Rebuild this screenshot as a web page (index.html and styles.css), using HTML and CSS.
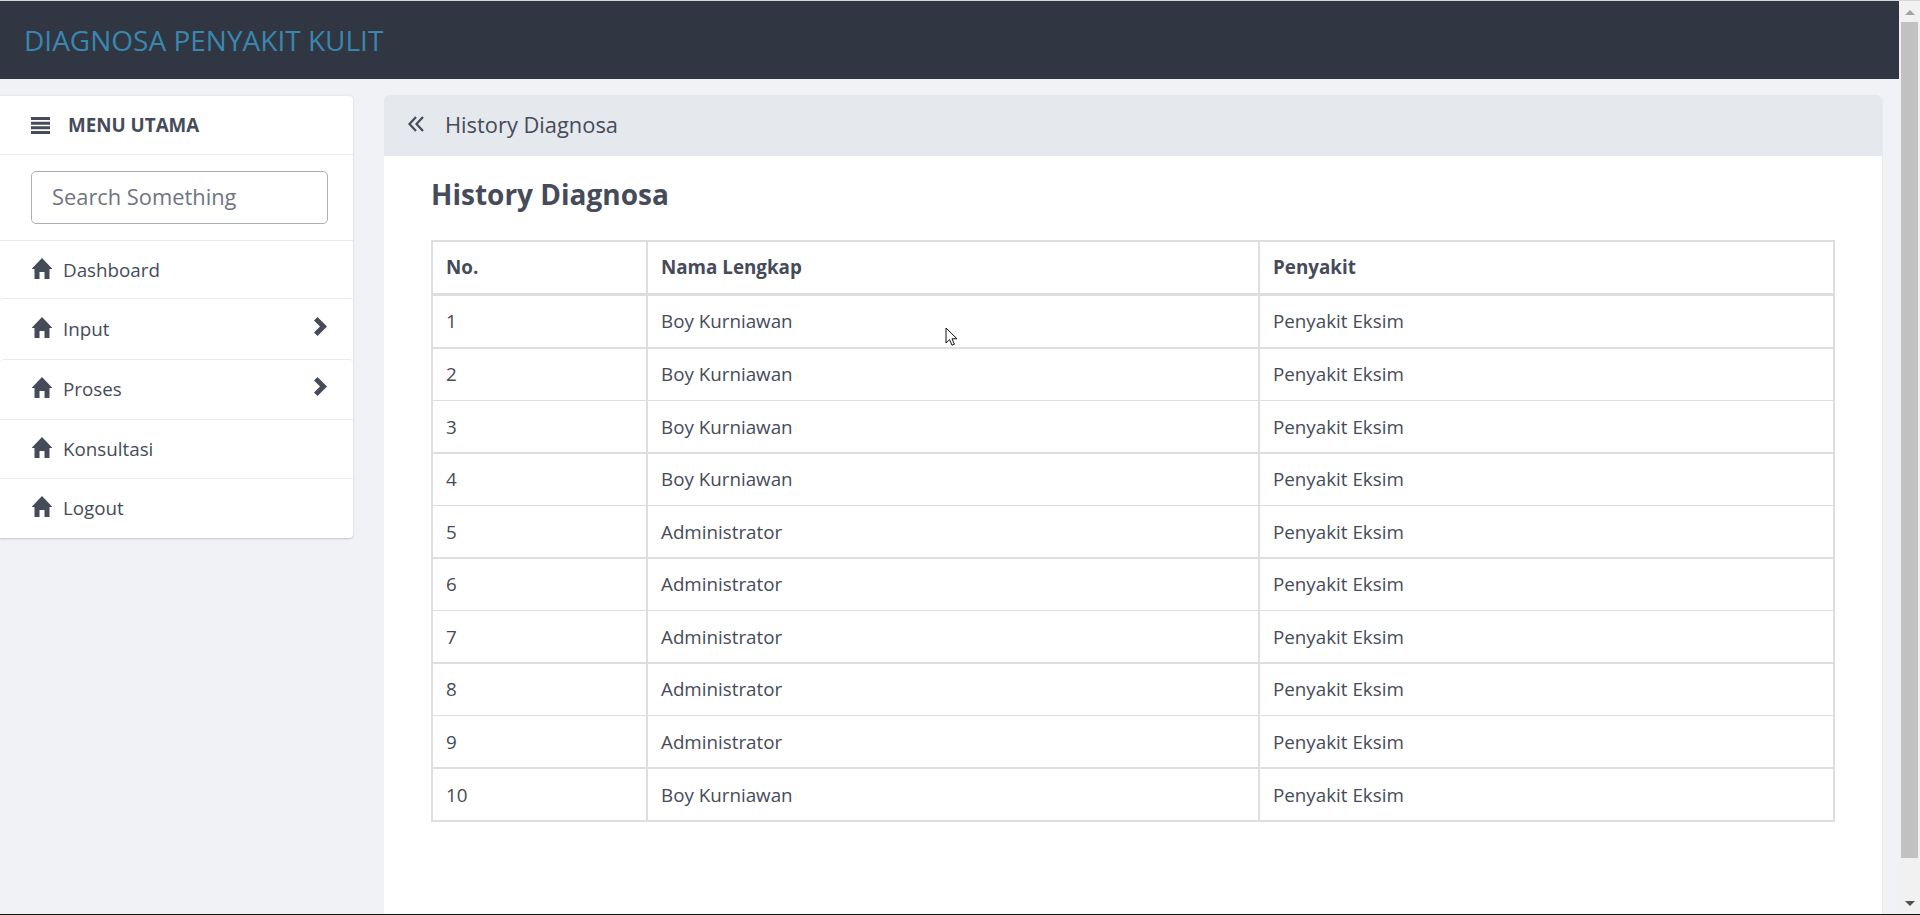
FILE: index.html
```html
<!DOCTYPE html>
<html>
<head>
    <title>History Diagnosa</title>
    <link rel="stylesheet" href="styles.css">
</head>
<body>
    <div class="window">
        <div class="page">
            <header class="topbar">
                <span class="brand">DIAGNOSA PENYAKIT KULIT</span>
            </header>
            <div class="content">
                <aside class="sidebar">
                    <div class="menu-title">
                        <svg class="icon-menu" viewBox="0 0 19 17"><path d="M0 0h19v3H0zM0 4.67h19v3H0zM0 9.33h19v3H0zM0 14h19v3H0z"/></svg>
                        <span>MENU UTAMA</span>
                    </div>
                    <div class="menu-search">
                        <input type="text" placeholder="Search Something">
                    </div>
                    <a class="menu-item item-dash"><svg class="icon-home" viewBox="0 0 20 21"><path d="M10 0 20 10.5V11h-2.5v10h-5v-7h-5v7h-5V11H0v-.5z"/></svg>Dashboard</a>
                    <a class="menu-item item-input"><svg class="icon-home" viewBox="0 0 20 21"><path d="M10 0 20 10.5V11h-2.5v10h-5v-7h-5v7h-5V11H0v-.5z"/></svg>Input<svg class="icon-chevron" viewBox="0 0 13 19"><path d="M3.5 0 13 9.5 3.5 19 0 15.5l6-6-6-6z"/></svg></a>
                    <a class="menu-item item-proses"><svg class="icon-home" viewBox="0 0 20 21"><path d="M10 0 20 10.5V11h-2.5v10h-5v-7h-5v7h-5V11H0v-.5z"/></svg>Proses<svg class="icon-chevron" viewBox="0 0 13 19"><path d="M3.5 0 13 9.5 3.5 19 0 15.5l6-6-6-6z"/></svg></a>
                    <a class="menu-item item-konsul"><svg class="icon-home" viewBox="0 0 20 21"><path d="M10 0 20 10.5V11h-2.5v10h-5v-7h-5v7h-5V11H0v-.5z"/></svg>Konsultasi</a>
                    <a class="menu-item item-logout"><svg class="icon-home" viewBox="0 0 20 21"><path d="M10 0 20 10.5V11h-2.5v10h-5v-7h-5v7h-5V11H0v-.5z"/></svg>Logout</a>
                </aside>
                <main class="panel">
                    <div class="panel-head">
                        <svg class="icon-back" viewBox="0 0 16 16"><path d="M8 1 1.5 8 8 15M15 1 8.5 8l6.5 7"/></svg>
                        <span>History Diagnosa</span>
                    </div>
                    <div class="panel-body">
                        <h2>History Diagnosa</h2>
                        <table class="history">
                            <thead>
                                <tr><th class="col-no">No.</th><th class="col-name">Nama Lengkap</th><th>Penyakit</th></tr>
                            </thead>
                            <tbody>
                                <tr><td>1</td><td>Boy Kurniawan</td><td>Penyakit Eksim</td></tr>
                                <tr><td>2</td><td>Boy Kurniawan</td><td>Penyakit Eksim</td></tr>
                                <tr><td>3</td><td>Boy Kurniawan</td><td>Penyakit Eksim</td></tr>
                                <tr><td>4</td><td>Boy Kurniawan</td><td>Penyakit Eksim</td></tr>
                                <tr><td>5</td><td>Administrator</td><td>Penyakit Eksim</td></tr>
                                <tr><td>6</td><td>Administrator</td><td>Penyakit Eksim</td></tr>
                                <tr><td>7</td><td>Administrator</td><td>Penyakit Eksim</td></tr>
                                <tr><td>8</td><td>Administrator</td><td>Penyakit Eksim</td></tr>
                                <tr><td>9</td><td>Administrator</td><td>Penyakit Eksim</td></tr>
                                <tr><td>10</td><td>Boy Kurniawan</td><td>Penyakit Eksim</td></tr>
                            </tbody>
                        </table>
                    </div>
                </main>
            </div>
        </div>
        <div class="scrollbar">
            <span class="arrow-up"></span>
            <div class="thumb"></div>
            <span class="arrow-down"></span>
        </div>
    </div>
    <svg class="cursor" viewBox="0 0 13 20"><path d="M1 1v15l3.6-3.4 2.4 5.6 2.4-1-2.4-5.4h5z"/></svg>
</body>
</html>
```

FILE: styles.css
```css
html, body {
    margin: 0;
    padding: 0;
    height: 915px;
    overflow: hidden;
}

body {
    font-family: "Open Sans", sans-serif;
    color: #454b59;
    background-color: #f0f2f6;
    position: relative;
}

.window {
    display: flex;
    height: 915px;
    box-sizing: border-box;
    border-top: 1px solid #d8d8d8;
    border-bottom: 1px solid #111;
}

.page {
    flex: 1;
    display: flex;
    flex-direction: column;
    min-width: 0;
}

.topbar {
    height: 78px;
    flex-shrink: 0;
    background-color: #303642;
    display: flex;
    align-items: center;
    padding-left: 24px;
}

.brand {
    font-size: 28px;
    color: #3a87ad;
}

.content {
    flex: 1;
    display: flex;
    padding-top: 16px;
    min-height: 0;
}

.sidebar {
    width: 353px;
    height: 443px;
    box-sizing: border-box;
    flex-shrink: 0;
    background-color: #fff;
    border-top: 1px solid #e8eaef;
    border-radius: 0 4px 4px 0;
    box-shadow: 0 1px 2px rgba(0, 0, 0, 0.2);
    margin-right: 31px;
}

.menu-title {
    height: 58px;
    display: flex;
    align-items: center;
    padding-left: 31px;
    font-size: 18.8px;
    font-weight: 700;
    border-bottom: 1px solid #e8eaef;
}

.icon-menu {
    width: 19px;
    height: 17px;
    fill: #454b59;
    margin-right: 18px;
}

.menu-search {
    padding: 16px 25px 16px 31px;
    border-bottom: 1px solid #e8eaef;
}

.menu-search input {
    display: block;
    width: 100%;
    height: 53px;
    box-sizing: border-box;
    padding: 0 20px 2px;
    font-family: "Open Sans", sans-serif;
    font-size: 21.85px;
    border: 1px solid #a9afb9;
    border-radius: 5px;
    background-color: #fff;
    outline: none;
}

.menu-search input::placeholder {
    color: #6f7480;
    opacity: 1;
}

.menu-item {
    display: flex;
    align-items: center;
    box-sizing: border-box;
    padding-left: 32px;
    padding-right: 26px;
    font-size: 18.8px;
}

.item-dash {
    height: 57px;
}

.item-input {
    height: 61px;
    border-top: 1px solid #e8eaef;
    border-radius: 4px 4px 0 0;
}

.item-proses {
    height: 61px;
    padding-bottom: 2px;
    border-top: 1px solid #e8eaef;
    border-bottom: 1px solid #e8eaef;
    border-radius: 4px 4px 0 0;
}

.item-konsul {
    height: 59px;
    border-bottom: 1px solid #e8eaef;
}

.item-logout {
    height: 59px;
    padding-bottom: 2px;
}

.icon-home {
    width: 20px;
    height: 21px;
    fill: #454b59;
    margin-right: 11px;
    margin-top: -3px;
}

.icon-chevron {
    width: 13px;
    height: 19px;
    fill: #454b59;
    margin-left: auto;
    margin-top: -5px;
}

.panel {
    flex: 1;
    min-width: 0;
    margin-right: 16px;
    background-color: #fff;
    border-right: 1px solid #e8eaef;
    border-radius: 5px 5px 0 0;
    display: flex;
    flex-direction: column;
}

.panel-head {
    height: 61px;
    box-sizing: border-box;
    flex-shrink: 0;
    display: flex;
    align-items: center;
    padding-left: 24px;
    padding-bottom: 2px;
    font-size: 21.85px;
    background-color: #e5e8ed;
    border-radius: 5px 5px 0 0;
}

.icon-back {
    width: 16px;
    height: 16px;
    fill: none;
    stroke: #454b59;
    stroke-width: 2.2;
    margin-right: 21px;
    margin-top: -1px;
}

.panel-body {
    padding: 0 47px;
}

.panel-body h2 {
    margin: 20px 0 27px;
    font-size: 28px;
    line-height: 37px;
    font-weight: 700;
}

/* lines in the table alternate 2px and 1px */
.history {
    width: 100%;
    table-layout: fixed;
    border-collapse: separate;
    border-spacing: 0;
    font-size: 18.8px;
}

.history th,
.history td {
    box-sizing: border-box;
    padding: 0 13px;
    text-align: left;
    border-right: 2px solid #dedede;
    border-bottom: 2px solid #dedede;
    height: 53px;
}

.history th:first-child,
.history td:first-child {
    border-left: 2px solid #dedede;
}

.history th {
    height: 56px;
    padding-bottom: 1px;
    border-top: 2px solid #dedede;
    border-bottom-width: 3px;
}

.history tbody tr:first-child td {
    padding-bottom: 2px;
}

.history tbody tr:nth-child(even) td {
    height: 52px;
    padding-bottom: 2px;
    border-bottom-width: 1px;
}

.history tbody tr:last-child td {
    height: 53px;
    padding-bottom: 0;
    border-bottom-width: 2px;
}

.col-no {
    width: 217px;
}

.col-name {
    width: 612px;
}

.scrollbar {
    width: 21px;
    flex-shrink: 0;
    background-color: #f1f1f1;
    display: flex;
    flex-direction: column;
    align-items: center;
}

.thumb {
    width: 17px;
    height: 836px;
    background-color: #c1c1c1;
    margin-top: 7px;
}

.arrow-up,
.arrow-down {
    width: 0;
    height: 0;
    border-left: 5px solid transparent;
    border-right: 5px solid transparent;
}

.arrow-up {
    border-bottom: 5px solid #a3a3a3;
    margin-top: 9px;
}

.arrow-down {
    border-top: 5px solid #505050;
    margin-top: 43px;
}

.cursor {
    position: absolute;
    left: 945px;
    top: 327px;
    width: 13px;
    height: 20px;
    fill: #fff;
    stroke: #111;
    stroke-width: 1;
}
```
